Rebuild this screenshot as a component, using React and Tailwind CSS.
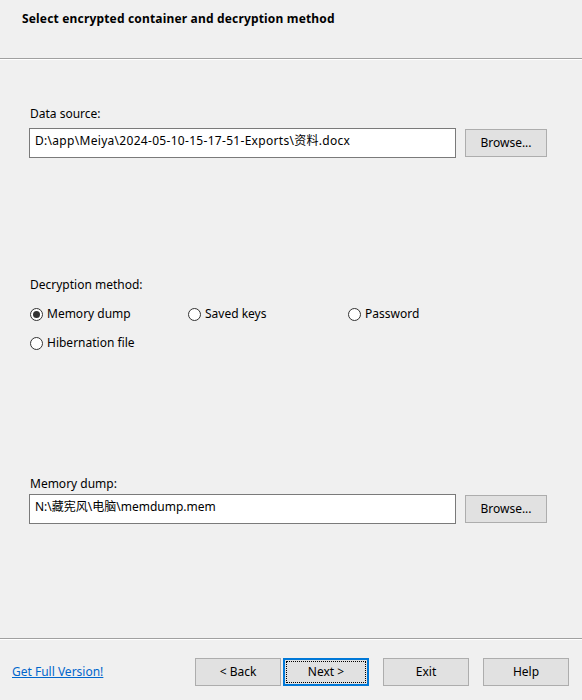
import React from "react";

const font = { fontFamily: '"Noto Sans", "Noto Sans CJK SC", sans-serif' };

function Radio({ checked, label }) {
  return (
    <label className="flex items-center gap-[4px] h-[16px] text-[12px] leading-[16px] text-black">
      <span className="w-[13px] h-[13px] rounded-full border border-[#333333] bg-white flex items-center justify-center">
        {checked && <span className="w-[7px] h-[7px] rounded-full bg-[#333333]" />}
      </span>
      <span>{label}</span>
    </label>
  );
}

function Btn({ children, w = "w-[82px]", focus }) {
  if (focus) {
    return (
      <div className="w-[86px] h-[28px] border-2 border-[#0078d7] bg-[#e1e1e1] p-px">
        <div className="w-full h-full border border-dotted border-black flex items-center justify-center text-[12px] text-black">
          {children}
        </div>
      </div>
    );
  }
  return (
    <div className={`${w} h-[28px] border border-[#adadad] bg-[#e1e1e1] flex items-center justify-center text-[12px] text-black`}>
      {children}
    </div>
  );
}

function PathRow({ value, wide }) {
  return (
    <div className="flex items-center ml-[29px]">
      <div className={`w-[427px] h-[30px] border border-[#7a7a7a] bg-white pl-[5px] pt-[4px] text-[12px] leading-[16px] text-black whitespace-nowrap overflow-hidden ${wide ? "tracking-[0.3px]" : ""}`}>
        {value}
      </div>
      <div className="ml-[9px]">
        <Btn>Browse...</Btn>
      </div>
    </div>
  );
}

export default function App() {
  return (
    <div className="w-[582px] h-[700px] bg-[#f0f0f0] flex flex-col" style={font}>
      <div className="h-[58px] pl-[22px] pt-[11px] text-[12px] leading-[16px] font-bold text-black tracking-[0.17px]">
        Select encrypted container and decryption method
      </div>
      <div className="h-px bg-[#a0a0a0]" />
      <div className="h-px bg-white" />
      <div className="flex-1 flex flex-col">
        <div className="mt-[46px] ml-[30px] text-[12px] leading-[16px] text-black">Data source:</div>
        <div className="mt-[6px]">
          <PathRow wide value="D:\app\Meiya\2024-05-10-15-17-51-Exports\资料.docx" />
        </div>
        <div className="mt-[119px] ml-[30px] text-[12px] leading-[16px] text-black">Decryption method:</div>
        <div className="mt-[13px] ml-[30px] grid grid-cols-[158px_160px_160px] gap-y-[13px]">
          <Radio checked label="Memory dump" />
          <Radio label="Saved keys" />
          <Radio label="Password" />
          <Radio label="Hibernation file" />
        </div>
        <div className="mt-[125px] ml-[30px] text-[12px] leading-[16px] text-black">Memory dump:</div>
        <div className="mt-[2px]">
          <PathRow value="N:\藏宪风\电脑\memdump.mem" />
        </div>
      </div>
      <div className="h-px bg-[#a0a0a0]" />
      <div className="h-px bg-white" />
      <div className="h-[60px] flex items-start pt-[18px]">
        <div className="ml-[12px] w-[183px] h-[28px] flex items-center">
          <span className="text-[12px] text-[#0066cc] underline cursor-pointer">Get Full Version!</span>
        </div>
        <Btn w="w-[86px]">&lt; Back</Btn>
        <div className="ml-[2px]">
          <Btn focus>Next &gt;</Btn>
        </div>
        <div className="ml-[14px]">
          <Btn w="w-[86px]">Exit</Btn>
        </div>
        <div className="ml-[14px]">
          <Btn w="w-[86px]">Help</Btn>
        </div>
      </div>
    </div>
  );
}
